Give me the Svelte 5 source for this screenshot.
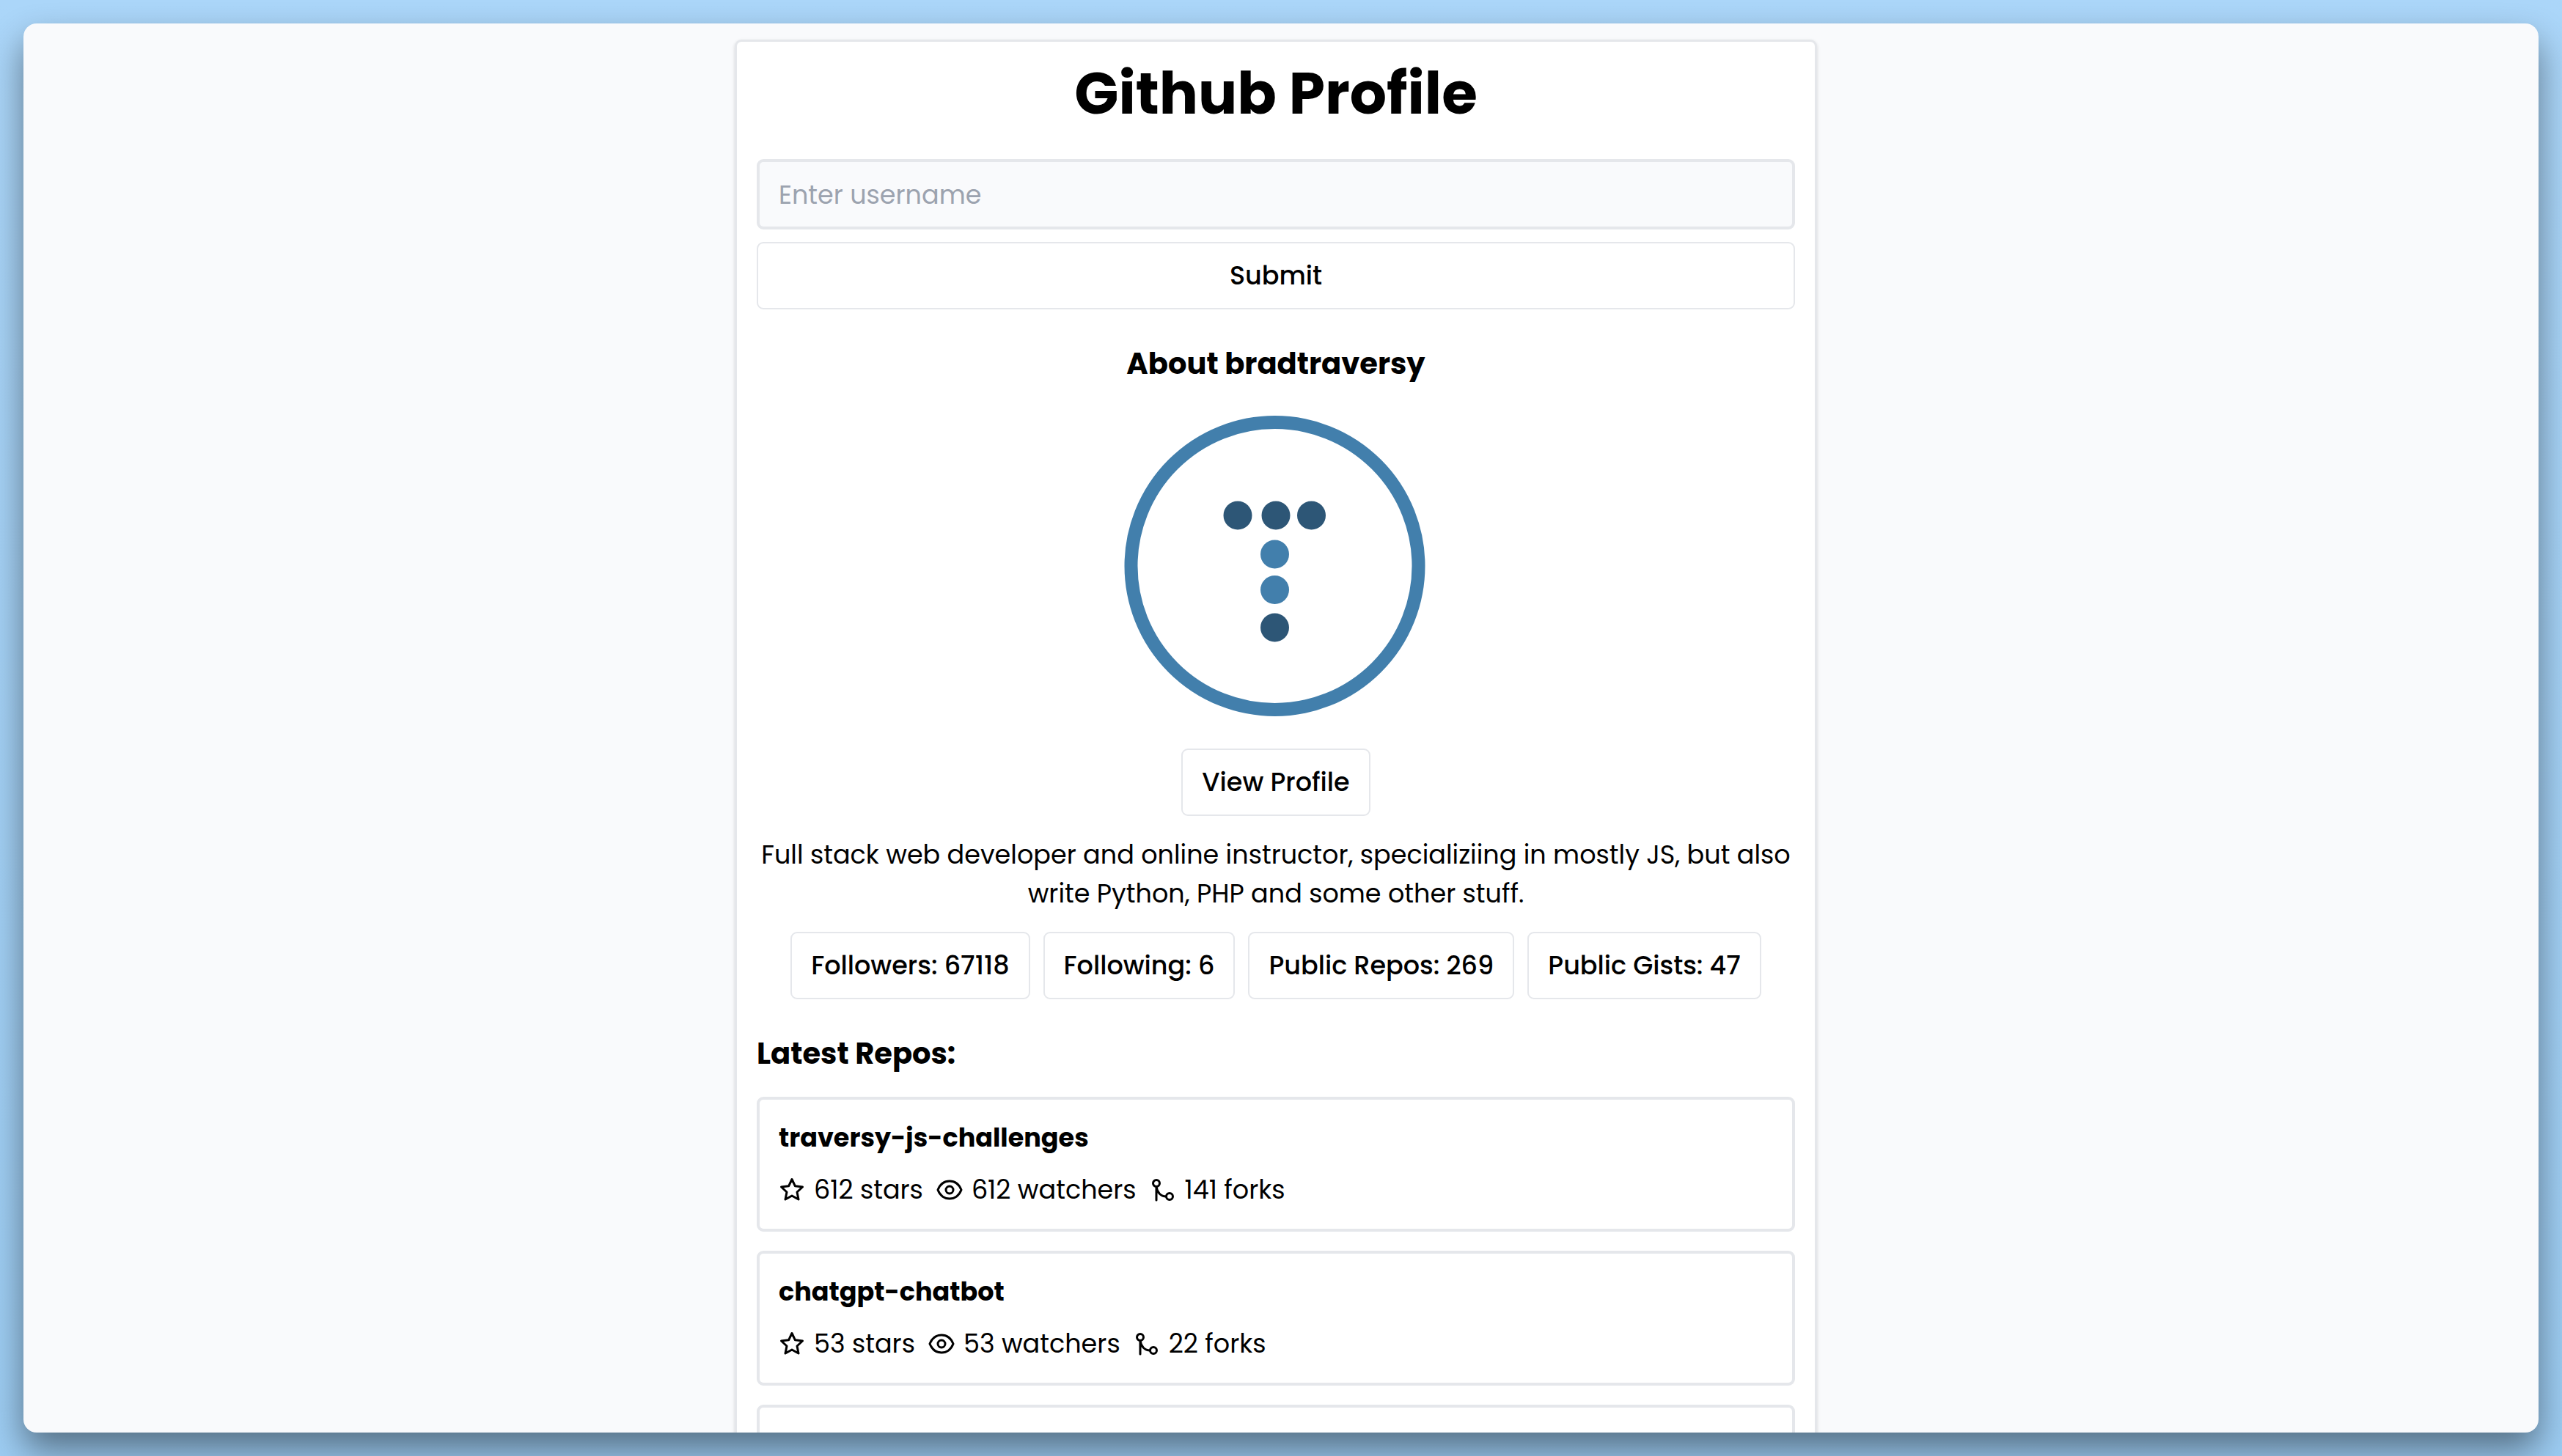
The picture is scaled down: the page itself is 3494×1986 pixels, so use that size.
<script>
  let username = $state('');

  const stats = ['Followers: 67118', 'Following: 6', 'Public Repos: 269', 'Public Gists: 47'];

  const repos = [
    { name: 'traversy-js-challenges', stars: 612, watchers: 612, forks: 141 },
    { name: 'chatgpt-chatbot', stars: 53, watchers: 53, forks: 22 },
    { name: '', stars: null, watchers: null, forks: null }
  ];
</script>

<div class="desktop">
  <div class="window">
    <main class="card">
      <h1>Github Profile</h1>

      <form onsubmit={(e) => e.preventDefault()}>
        <input type="text" placeholder="Enter username" aria-label="Username" bind:value={username} />
        <button class="box submit" type="submit">Submit</button>
      </form>

      <section class="about">
        <h2>About bradtraversy</h2>
        <svg class="avatar" viewBox="0 0 432 432" role="img" aria-label="bradtraversy avatar">
          <circle cx="214.500" cy="217" r="196" fill="none" stroke="#427fac" stroke-width="18" />
          <g fill="#2d5676">
            <circle cx="164" cy="148" r="19.500" />
            <circle cx="216" cy="148" r="19.500" />
            <circle cx="264.500" cy="148" r="19.500" />
            <circle cx="214.500" cy="301" r="19.500" />
          </g>
          <g fill="#427fac">
            <circle cx="214.500" cy="201" r="19.500" />
            <circle cx="214.500" cy="249.500" r="19.500" />
          </g>
        </svg>
        <a class="box" href="#profile">View Profile</a>
        <p>Full stack web developer and online instructor, specializiing in mostly JS, but also write Python, PHP and some other stuff.</p>
        <ul class="stats">
          {#each stats as stat}
            <li class="box">{stat}</li>
          {/each}
        </ul>
      </section>

      <section class="latest">
        <h2>Latest Repos:</h2>
        {#each repos as repo}
          <article class="repo">
            {#if repo.name}
              <h3>{repo.name}</h3>
              <div class="meta">
                <span>
                  <svg viewBox="0 0 36 36" aria-hidden="true"><path d="M18 3.5l4.400 9.300 10.100 1.200-7.500 7 2 10-9-5-9 5 2-10-7.500-7 10.100-1.200z" /></svg>
                  {repo.stars} stars
                </span>
                <span>
                  <svg viewBox="0 0 36 36" aria-hidden="true"><path d="M2 18c3-7.500 9-12 16-12s13 4.500 16 12c-3 7.500-9 12-16 12s-13-4.500-16-12z" /><circle cx="18" cy="18" r="5" /></svg>
                  {repo.watchers} watchers
                </span>
                <span>
                  <svg viewBox="0 0 36 36" aria-hidden="true"><circle cx="9" cy="9" r="4.500" /><circle cx="27" cy="27" r="4.500" /><path d="M9 13.500v18.500M9 13.500c1 8 6 13.500 13.500 13.500" /></svg>
                  {repo.forks} forks
                </span>
              </div>
            {/if}
          </article>
        {/each}
      </section>
    </main>
  </div>
</div>

<style>
  :global(body) {
    margin: 0;
  }

  .desktop {
    box-sizing: border-box;
    height: 100vh;
    padding: 32px;
    overflow: hidden;
    background: linear-gradient(#abd6f9, #9dcdf3);
    font-family: Poppins, Inter, sans-serif;
    font-size: 35px;
    line-height: 53px;
    color: #000;
  }

  .window {
    box-sizing: border-box;
    height: 100%;
    padding: 22px 14px 0 0;
    overflow: hidden;
    border-radius: 18px;
    background: #f9fafc;
    box-shadow: 0 24px 48px rgba(0, 0, 0, 0.45);
  }

  .card {
    box-sizing: border-box;
    max-width: 1476px;
    margin: 0 auto;
    padding: 26px 27px;
    border: 3px solid #e5e7eb;
    border-radius: 9px;
    background: #fff;
    box-shadow: 0 2px 5px rgba(0, 0, 0, 0.14);
  }

  h1,
  h2,
  h3,
  p,
  ul {
    margin: 0;
    padding: 0;
  }

  h1 {
    margin-bottom: 44px;
    font-size: 79px;
    line-height: 90px;
    text-align: center;
  }

  h2 {
    margin-bottom: 32px;
    font-size: 40px;
  }

  h3 {
    font-size: 35px;
  }

  form {
    display: flex;
    flex-direction: column;
    gap: 17px;
  }

  input {
    box-sizing: border-box;
    width: 100%;
    height: 96px;
    padding: 0 26px;
    border: 4px solid #e5e7eb;
    border-radius: 9px;
    background: #f9fafc;
    font: inherit;
  }

  input::placeholder {
    color: #9ca3af;
    opacity: 1;
  }

  .box {
    box-sizing: border-box;
    padding: 18px 26px;
    border: 2px solid #e5e7eb;
    border-radius: 9px;
    background: #fff;
    color: #000;
    font: inherit;
    font-weight: 500;
    line-height: 52px;
    text-decoration: none;
    white-space: nowrap;
  }

  .about {
    display: flex;
    flex-direction: column;
    align-items: center;
    padding-top: 48px;
    text-align: center;
  }

  .avatar {
    display: block;
    width: 432px;
    height: 432px;
    margin-bottom: 34px;
  }

  p {
    margin: 26px 0;
  }

  .stats {
    display: flex;
    gap: 18px;
    list-style: none;
  }

  .latest {
    padding-top: 48px;
  }

  .repo {
    box-sizing: border-box;
    min-height: 184px;
    margin-bottom: 26px;
    padding: 25px 26px;
    border: 4px solid #e5e7eb;
    border-radius: 9px;
  }

  .meta {
    display: flex;
    gap: 18px;
    margin-top: 18px;
  }

  .meta span {
    display: flex;
    align-items: center;
    gap: 12px;
    white-space: nowrap;
  }

  .meta svg {
    width: 36px;
    height: 36px;
    fill: none;
    stroke: #000;
    stroke-width: 3;
    stroke-linecap: round;
    stroke-linejoin: round;
  }
</style>
